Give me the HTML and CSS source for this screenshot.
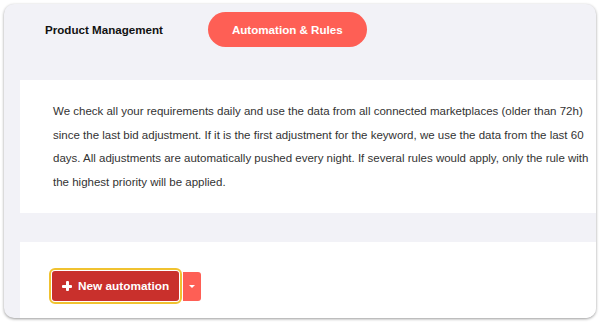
FILE: index.html
```html
<!DOCTYPE html>
<html>
<head>
<meta charset="utf-8">
<link rel="stylesheet" href="styles.css">
</head>
<body>
<div class="frame">
  <div class="tabs">
    <div class="tab">Product Management</div>
    <div class="tab active">Automation &amp; Rules</div>
  </div>
  <div class="panel info">
    <p>We check all your requirements daily and use the data from all connected marketplaces (older than 72h) since the last bid adjustment. If it is the first adjustment for the keyword, we use the data from the last 60 days. All adjustments are automatically pushed every night. If several rules would apply, only the rule with the highest priority will be applied.</p>
  </div>
  <div class="panel actions">
    <div class="btn-group">
      <div class="focus-ring">
        <button class="btn-main"><span class="plus"></span>New automation</button>
      </div>
      <button class="btn-drop"><span class="caret"></span></button>
    </div>
  </div>
</div>
</body>
</html>
```
FILE: styles.css
```css
html, body {
  margin: 0;
  padding: 0;
  background: #ffffff;
}
body {
  font-family: "Liberation Sans", Arial, sans-serif;
  width: 600px;
  height: 324px;
  overflow: hidden;
}
.frame {
  margin: 4px 4px 0 4px;
  width: 592px;
  height: 314px;
  background: #f2f2f7;
  border-radius: 10px;
  box-shadow: 0 1px 3px rgba(0,0,0,0.4);
  overflow: hidden;
  display: flex;
  flex-direction: column;
}
.tabs {
  display: flex;
  align-items: center;
  height: 35px;
  margin-top: 8px;
  padding-left: 16px;
  gap: 20px;
}
.tab {
  font-size: 11.6px;
  font-weight: bold;
  color: #111;
  padding: 0 25px;
  height: 35px;
  line-height: 35px;
  border-radius: 18px;
}
.tab.active {
  background: #fe5f55;
  color: #fff;
  padding: 0 24px;
}
.panel {
  background: #fff;
  margin-left: 16px;
}
.info {
  margin-top: 33px;
  height: 133px;
  box-sizing: border-box;
  padding: 20px 6px 0 33px;
}
.info p {
  margin: 0;
  font-size: 11.5px;
  line-height: 23.5px;
  color: #333;
}
.actions {
  margin-top: 29px;
  flex: 1;
  padding: 26px 0 0 29px;
}
.btn-group {
  display: flex;
  align-items: center;
  gap: 1px;
}
.focus-ring {
  border: 2px solid #f0c230;
  border-radius: 6px;
  padding: 1px;
}
.btn-main {
  display: flex;
  align-items: center;
  height: 30px;
  padding: 0 10px 0 10px;
  background: #c9302c;
  border: none;
  border-radius: 3px;
  color: #fff;
  font-family: "Liberation Sans", Arial, sans-serif;
  font-size: 11.8px;
  font-weight: bold;
  gap: 6px;
}
.plus {
  position: relative;
  width: 10px;
  height: 10px;
  display: inline-block;
}
.plus::before, .plus::after {
  content: "";
  position: absolute;
  background: #fff;
  border-radius: 1px;
}
.plus::before {
  left: 0; top: 3.5px; width: 10px; height: 3px;
}
.plus::after {
  left: 3.5px; top: 0; width: 3px; height: 10px;
}
.btn-drop {
  width: 18px;
  height: 29px;
  background: #fe5f55;
  border: none;
  border-radius: 0 3px 3px 0;
  display: flex;
  align-items: center;
  justify-content: center;
  padding: 0;
}
.caret {
  width: 0;
  height: 0;
  border-left: 3.5px solid transparent;
  border-right: 3.5px solid transparent;
  border-top: 3.5px solid #fff;
}
```
